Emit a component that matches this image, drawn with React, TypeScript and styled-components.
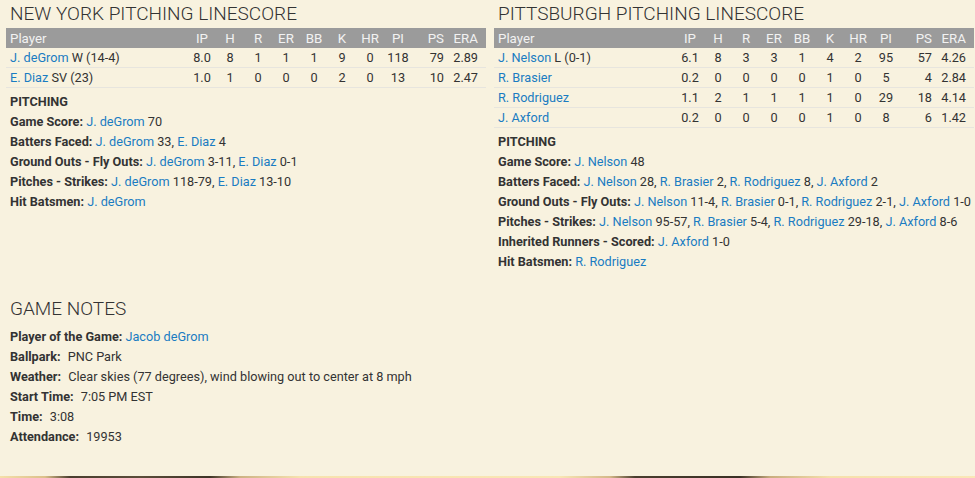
import React from 'react'
import styled, { createGlobalStyle } from 'styled-components'

const GlobalStyle = createGlobalStyle`
  html, body {
    margin: 0;
    padding: 0;
  }
  body {
    font-family: Roboto, 'Liberation Sans', sans-serif;
    color: #333;
    background: linear-gradient(
      to right,
      #f5dfa9 0px,
      #dcc08a 45px,
      #4a3e2e 70px,
      #5b4d39 140px,
      #3e3426 210px,
      #cdb283 240px,
      #f7e2ae 300px,
      #f9e6b4 560px,
      #d4b888 610px,
      #4a3e2e 635px,
      #3a3024 740px,
      #c9ad7e 770px,
      #f6e0ab 830px,
      #fae7b6 975px
    );
  }
`

const Page = styled.div`
  box-sizing: border-box;
  min-height: 476px;
  padding: 0 6px;
  background: #f8f2df;
`

const Columns = styled.div`
  display: grid;
  grid-template-columns: 480px 480px;
  gap: 8px;
  align-items: start;
`

const Section = styled.section<{ $gapTop?: number }>`
  margin-top: ${(p) => p.$gapTop || 0}px;
`

const Title = styled.h2`
  margin: 0;
  padding-left: 4px;
  height: 28px;
  line-height: 28px;
  font-size: 19px;
  font-weight: 300;
  color: #333;
  white-space: nowrap;
`

const Table = styled.table`
  width: 480px;
  border-collapse: collapse;
  table-layout: fixed;
  font-size: 12.7px;
`

const HeadCell = styled.th<{ $align?: string; $padRight?: number }>`
  height: 20px;
  padding: 0 ${(p) => p.$padRight || 0}px 0 ${(p) => (p.$align === 'left' ? 4 : 0)}px;
  background: #9b9b9b;
  color: #f2f2f2;
  font-size: 13.3px;
  font-weight: 400;
  text-align: ${(p) => p.$align || 'center'};
`

const Cell = styled.td<{ $align?: string; $padRight?: number }>`
  height: 19px;
  line-height: 19px;
  padding: 0 ${(p) => p.$padRight || 0}px 0 ${(p) => (p.$align === 'left' ? 4 : 0)}px;
  border-bottom: 1px solid #e7e5de;
  text-align: ${(p) => p.$align || 'center'};
  white-space: nowrap;
`

const Link = styled.a`
  color: #1a7cc2;
  text-decoration: none;
`

const Notes = styled.div`
  margin-top: 4px;
  padding-left: 4px;
  font-size: 12.7px;
  line-height: 20px;
`

const Line = styled.div`
  white-space: nowrap;
`

const Label = styled.b<{ $spaced?: boolean }>`
  font-weight: 700;
  margin-right: ${(p) => (p.$spaced ? 4 : 0)}px;
`

const Heading = styled.div`
  font-weight: 700;
`

type Pitcher = {
  name: string
  note?: string
  stats: string[]
}

const nyPitchers: Pitcher[] = [
  { name: 'J. deGrom', note: 'W (14-4)', stats: ['8.0', '8', '1', '1', '1', '9', '0', '118', '79', '2.89'] },
  { name: 'E. Diaz', note: 'SV (23)', stats: ['1.0', '1', '0', '0', '0', '2', '0', '13', '10', '2.47'] },
]

const pitPitchers: Pitcher[] = [
  { name: 'J. Nelson', note: 'L (0-1)', stats: ['6.1', '8', '3', '3', '1', '4', '2', '95', '57', '4.26'] },
  { name: 'R. Brasier', stats: ['0.2', '0', '0', '0', '0', '1', '0', '5', '4', '2.84'] },
  { name: 'R. Rodriguez', stats: ['1.1', '2', '1', '1', '1', '1', '0', '29', '18', '4.14'] },
  { name: 'J. Axford', stats: ['0.2', '0', '0', '0', '0', '1', '0', '8', '6', '1.42'] },
]

const cols = ['IP', 'H', 'R', 'ER', 'BB', 'K', 'HR', 'PI', 'PS', 'ERA']

// alignment per stat column; PS and ERA sit flush right
const colAlign = (i: number) => (i >= 8 ? 'right' : 'center')
const colPad = (i: number) => (i === 8 ? 4 : i === 9 ? 8 : 0)

// [player, value] pairs rendered as "Player value, Player value"
type Entry = [string, string?]

const EntryList = ({ items }: { items: Entry[] }) => (
  <>
    {items.map(([name, val], i) => (
      <React.Fragment key={name}>
        <Link href="#">{name}</Link>
        {val ? ` ${val}` : ''}
        {i < items.length - 1 ? ', ' : ''}
      </React.Fragment>
    ))}
  </>
)

const Linescore = ({ title, pitchers }: { title: string; pitchers: Pitcher[] }) => (
  <>
    <Title>{title}</Title>
    <Table>
      <colgroup>
        <col style={{ width: 182 }} />
        {cols.map((c, i) => (
          <col key={c} style={{ width: i < 8 ? 28 : i === 8 ? 36 : 38 }} />
        ))}
      </colgroup>
      <thead>
        <tr>
          <HeadCell $align="left">Player</HeadCell>
          {cols.map((c, i) => (
            <HeadCell key={c} $align={colAlign(i)} $padRight={colPad(i)}>
              {c}
            </HeadCell>
          ))}
        </tr>
      </thead>
      <tbody>
        {pitchers.map((p) => (
          <tr key={p.name}>
            <Cell $align="left">
              <Link href="#">{p.name}</Link>
              {p.note ? ` ${p.note}` : ''}
            </Cell>
            {p.stats.map((s, i) => (
              <Cell key={i} $align={colAlign(i)} $padRight={colPad(i)}>
                {s}
              </Cell>
            ))}
          </tr>
        ))}
      </tbody>
    </Table>
  </>
)

export default function App() {
  return (
    <>
      <GlobalStyle />
      <Page>
        <Columns>
          <Section>
            <Linescore title="NEW YORK PITCHING LINESCORE" pitchers={nyPitchers} />
            <Notes>
              <Heading>PITCHING</Heading>
              <Line>
                <Label>Game Score:</Label> <EntryList items={[['J. deGrom', '70']]} />
              </Line>
              <Line>
                <Label>Batters Faced:</Label>{' '}
                <EntryList items={[['J. deGrom', '33'], ['E. Diaz', '4']]} />
              </Line>
              <Line>
                <Label>Ground Outs - Fly Outs:</Label>{' '}
                <EntryList items={[['J. deGrom', '3-11'], ['E. Diaz', '0-1']]} />
              </Line>
              <Line>
                <Label>Pitches - Strikes:</Label>{' '}
                <EntryList items={[['J. deGrom', '118-79'], ['E. Diaz', '13-10']]} />
              </Line>
              <Line>
                <Label>Hit Batsmen:</Label> <EntryList items={[['J. deGrom']]} />
              </Line>
            </Notes>
          </Section>
          <Section>
            <Linescore title="PITTSBURGH PITCHING LINESCORE" pitchers={pitPitchers} />
            <Notes>
              <Heading>PITCHING</Heading>
              <Line>
                <Label>Game Score:</Label> <EntryList items={[['J. Nelson', '48']]} />
              </Line>
              <Line>
                <Label>Batters Faced:</Label>{' '}
                <EntryList
                  items={[['J. Nelson', '28'], ['R. Brasier', '2'], ['R. Rodriguez', '8'], ['J. Axford', '2']]}
                />
              </Line>
              <Line>
                <Label>Ground Outs - Fly Outs:</Label>{' '}
                <EntryList
                  items={[['J. Nelson', '11-4'], ['R. Brasier', '0-1'], ['R. Rodriguez', '2-1'], ['J. Axford', '1-0']]}
                />
              </Line>
              <Line>
                <Label>Pitches - Strikes:</Label>{' '}
                <EntryList
                  items={[['J. Nelson', '95-57'], ['R. Brasier', '5-4'], ['R. Rodriguez', '29-18'], ['J. Axford', '8-6']]}
                />
              </Line>
              <Line>
                <Label>Inherited Runners - Scored:</Label> <EntryList items={[['J. Axford', '1-0']]} />
              </Line>
              <Line>
                <Label>Hit Batsmen:</Label> <EntryList items={[['R. Rodriguez']]} />
              </Line>
            </Notes>
          </Section>
        </Columns>
        <Section $gapTop={23}>
          <Title>GAME NOTES</Title>
          <Notes>
            <Line>
              <Label>Player of the Game:</Label> <Link href="#">Jacob deGrom</Link>
            </Line>
            <Line>
              <Label $spaced>Ballpark:</Label> PNC Park
            </Line>
            <Line>
              <Label $spaced>Weather:</Label> Clear skies (77 degrees), wind blowing out to center at 8 mph
            </Line>
            <Line>
              <Label $spaced>Start Time:</Label> 7:05 PM EST
            </Line>
            <Line>
              <Label $spaced>Time:</Label> 3:08
            </Line>
            <Line>
              <Label $spaced>Attendance:</Label> 19953
            </Line>
          </Notes>
        </Section>
      </Page>
    </>
  )
}
